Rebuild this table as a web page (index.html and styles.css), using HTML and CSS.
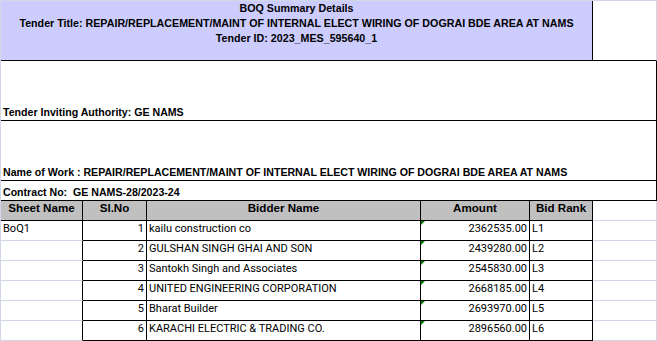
FILE: index.html
```html
<!DOCTYPE html>
<html>
<head>
<meta charset="utf-8">
<link rel="stylesheet" href="styles.css">
</head>
<body>
<div class="sheet">
  <div class="cell title">
    <div>BOQ Summary Details</div>
    <div>Tender Title: REPAIR/REPLACEMENT/MAINT OF INTERNAL ELECT WIRING OF DOGRAI BDE AREA AT NAMS</div>
    <div>Tender ID: 2023_MES_595640_1</div>
  </div>
  <div class="cell blank-top"></div>

  <div class="cell info tall">Tender Inviting Authority: GE NAMS</div>
  <div class="cell info tall">Name of Work : REPAIR/REPLACEMENT/MAINT OF INTERNAL ELECT WIRING OF DOGRAI BDE AREA AT NAMS</div>
  <div class="cell info short">Contract No:&nbsp; GE NAMS-28/2023-24</div>

  <div class="cell head">Sheet Name</div>
  <div class="cell head">Sl.No</div>
  <div class="cell head">Bidder Name</div>
  <div class="cell head">Amount</div>
  <div class="cell head">Bid Rank</div>
  <div class="cell plain"></div>

  <div class="cell data sheetname">BoQ1</div>
  <div class="cell data boxed num">1</div>
  <div class="cell data boxed">kailu construction co</div>
  <div class="cell data boxed num amount">2362535.00</div>
  <div class="cell data boxed">L1</div>
  <div class="cell plain"></div>

  <div class="cell data sheetname"></div>
  <div class="cell data boxed num">2</div>
  <div class="cell data boxed">GULSHAN SINGH GHAI AND SON</div>
  <div class="cell data boxed num amount">2439280.00</div>
  <div class="cell data boxed">L2</div>
  <div class="cell plain"></div>

  <div class="cell data sheetname"></div>
  <div class="cell data boxed num">3</div>
  <div class="cell data boxed">Santokh Singh and Associates</div>
  <div class="cell data boxed num amount">2545830.00</div>
  <div class="cell data boxed">L3</div>
  <div class="cell plain"></div>

  <div class="cell data sheetname"></div>
  <div class="cell data boxed num">4</div>
  <div class="cell data boxed">UNITED ENGINEERING CORPORATION</div>
  <div class="cell data boxed num amount">2668185.00</div>
  <div class="cell data boxed">L4</div>
  <div class="cell plain"></div>

  <div class="cell data sheetname"></div>
  <div class="cell data boxed num">5</div>
  <div class="cell data boxed">Bharat Builder</div>
  <div class="cell data boxed num amount">2693970.00</div>
  <div class="cell data boxed">L5</div>
  <div class="cell plain"></div>

  <div class="cell data sheetname"></div>
  <div class="cell data boxed num">6</div>
  <div class="cell data boxed">KARACHI ELECTRIC &amp; TRADING CO.</div>
  <div class="cell data boxed num amount">2896560.00</div>
  <div class="cell data boxed">L6</div>
  <div class="cell plain"></div>
</div>
</body>
</html>
```
FILE: styles.css
```css
html, body {
  margin: 0;
  padding: 0;
  background: #ffffff;
}

.sheet {
  display: grid;
  grid-template-columns: 82px 64px 274px 109px 63px 64px;
  grid-template-rows: 60px 60px 60px 20px 20px repeat(6, 20px);
  width: 657px;
  box-sizing: border-box;
  border-left: 1px solid #d0d7e5;
  border-top: 1px solid #d0d7e5;
  font-family: "Liberation Sans", Arial, sans-serif;
  font-size: 11px;
  line-height: 15px;
  color: #000;
}

.cell {
  box-sizing: border-box;
  border-right: 1px solid #d0d7e5;
  border-bottom: 1px solid #d0d7e5;
  padding: 0 2px;
  white-space: nowrap;
  overflow: hidden;
  position: relative;
}

.title {
  grid-column: 1 / 6;
  background: #ccccff;
  border-right-color: #000;
  border-bottom-color: #000;
  font-weight: bold;
  font-size: 10.7px;
  text-align: center;
}

.blank-top {
  border-bottom-color: #000;
}

.info {
  grid-column: 1 / 7;
  border-right-color: #000;
  border-bottom-color: #000;
  font-weight: bold;
  font-size: 10.6px;
  display: flex;
  align-items: flex-end;
}

.head {
  background: #c0c0c0;
  border-right-color: #000;
  border-bottom-color: #000;
  font-weight: bold;
  font-size: 11.6px;
  line-height: 14px;
  text-align: center;
}

.data {
  font-family: Roboto, "Liberation Sans", sans-serif;
  font-size: 11px;
}

.sheetname {
  border-right-color: #000;
}

.boxed {
  border-right-color: #000;
  border-bottom-color: #000;
}

.num {
  text-align: right;
}

.amount::before {
  content: "";
  position: absolute;
  left: 0;
  top: 0;
  width: 0;
  height: 0;
  border-top: 4px solid #008000;
  border-right: 4px solid transparent;
}
```
